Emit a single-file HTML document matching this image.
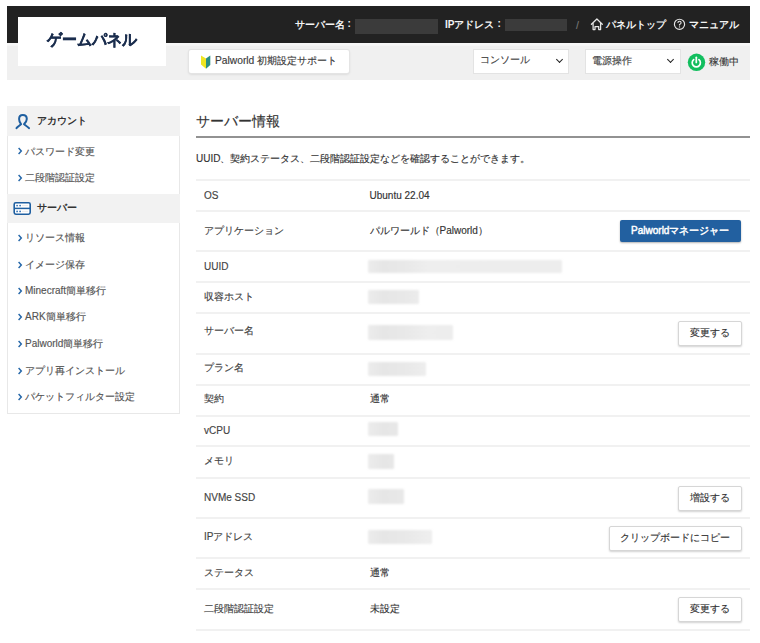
<!DOCTYPE html>
<html lang="ja">
<head>
<meta charset="utf-8">
<style>
*{box-sizing:border-box;margin:0;padding:0}
html,body{width:760px;height:643px;overflow:hidden;background:#fff}
body{position:relative;font-family:"Liberation Sans",sans-serif;font-size:10px;color:#333}
.a{position:absolute;white-space:nowrap}
.t{position:absolute;white-space:nowrap;line-height:14px;height:14px;-webkit-text-stroke:0.15px currentColor}
/* header */
#dark{left:7px;top:6px;width:743px;height:37px;background:#222}
#band{left:7px;top:43px;width:743px;height:2px;background:#f7f7f7}
#gray{left:7px;top:45px;width:743px;height:35px;background:linear-gradient(#f5f5f5 0,#f5f5f5 1px,#f0f0f0 1px)}
#logo{left:18px;top:17px;width:148px;height:49px;background:#fff}
#logotxt{left:18px;top:31px;width:148px;text-align:center;font-weight:bold;font-size:14.6px;line-height:18px;height:18px;color:#1b2e4e;letter-spacing:0;transform:scaleY(1.07);-webkit-text-stroke:0.35px #1b2e4e !important}
.ht{color:#f4f4f4;font-weight:bold;font-size:10px;-webkit-text-stroke:0 !important}
.red{position:absolute;background:#3b3b3b}
.btn{position:absolute;background:#fff;border:1px solid #d6d6d6;border-radius:2px;box-shadow:0 1px 2px rgba(0,0,0,.18);text-align:center;color:#333}
.sel{position:absolute;background:#fff;border:1px solid #e3e3e3}
/* sidebar */
#side{left:7px;top:106px;width:173px;height:308px;border:1px solid #e8e8e8;border-top:none;background:#fff}
.sh{position:absolute;left:7px;width:173px;background:#f2f2f2}
.sht{font-weight:bold;font-size:10px;color:#333;-webkit-text-stroke:0 !important}
.it{color:#555}
.chev{position:absolute;left:16.3px;width:4.7px;height:4.7px;border-right:2px solid #1b5896;border-top:2px solid #1b5896;transform:rotate(45deg)}
.dchev{position:absolute;width:5px;height:5px;border-right:1.8px solid #222;border-top:1.8px solid #222;transform:rotate(135deg)}
/* main */
.line{position:absolute;left:196px;width:554px;height:2px;background:#f1f1f1}
.lab{color:#444}
.val{color:#333}
.blur{position:absolute;background:linear-gradient(90deg,#ececec 0,#e6e6e6 15px,#e9e9e9 40px,#eeeeee 60px,#ededed 100%);border-radius:1px;filter:blur(1.1px)}
</style>
</head>
<body>
<!-- header -->
<div class="a" id="dark"></div>
<div class="a" id="band"></div>
<div class="a" id="gray"></div>
<div class="a" id="logo"></div>
<div class="t" id="logotxt">ゲームパネル</div>

<div class="t ht" style="left:295px;top:17.5px">サーバー名</div><div class="t ht" style="left:347.5px;top:17px">:</div>
<div class="red" style="left:355px;top:19px;width:83px;height:15px"></div>
<div class="t ht" style="left:445px;top:17.5px">IPアドレス</div><div class="t ht" style="left:497.5px;top:17px">:</div>
<div class="red" style="left:505px;top:19px;width:62px;height:12px"></div>
<div class="t" style="left:576px;top:17.5px;color:#777;font-size:10.5px">/</div>
<svg class="a" style="left:588px;top:15px" width="20" height="20" viewBox="0 0 20 20"><path d="M3.4 9.3 L8.9 4 L14.3 9.3 M5.1 7.8 V14.6 H7 V11.5 H10.7 V14.6 H12.6 V7.8" fill="none" stroke="#e6e6e6" stroke-width="1.25" stroke-linejoin="round" stroke-linecap="round"/></svg>
<div class="t ht" style="left:606px;top:17.5px">パネルトップ</div>
<svg class="a" style="left:673px;top:18px" width="13" height="13" viewBox="0 0 13 13"><circle cx="6.5" cy="6.3" r="5.1" fill="none" stroke="#e6e6e6" stroke-width="1.15"/><path d="M4.9 5.1 Q4.9 3.3 6.5 3.3 Q8.1 3.3 8.1 4.8 Q8.1 5.9 6.5 6.5 V7.4" fill="none" stroke="#e6e6e6" stroke-width="1.1"/><circle cx="6.5" cy="8.9" r="0.65" fill="#e6e6e6"/></svg>
<div class="t ht" style="left:689px;top:17.5px">マニュアル</div>

<!-- toolbar -->
<div class="btn" style="left:189px;top:49.6px;width:160px;height:23.8px;border:none;box-shadow:0 0 0 1px #e4e4e4,0 1px 3px rgba(0,0,0,.16)"></div>
<svg class="a" style="left:201px;top:54.5px" width="10" height="14" viewBox="0 0 10 14"><path d="M0 0.5 L5 3.5 L5 13.8 L0 9.6 Z" fill="#efe522"/><path d="M9.3 0.5 L5 3.5 L5 13.8 L9.3 10 Z" fill="#2c8f84"/></svg>
<div class="t" style="left:215px;top:53.8px;color:#3a3a3a;font-size:10.25px">Palworld 初期設定サポート</div>

<div class="sel" style="left:473px;top:49px;width:96px;height:25px"></div>
<div class="t" style="left:479.5px;top:53px;color:#444">コンソール</div>
<div class="dchev" style="left:557px;top:57px"></div>
<div class="sel" style="left:585px;top:49px;width:96px;height:25px"></div>
<div class="t" style="left:592px;top:53.5px;color:#444">電源操作</div>
<div class="dchev" style="left:668px;top:57px"></div>
<svg class="a" style="left:687px;top:52.5px" width="19" height="19" viewBox="0 0 19 19"><circle cx="9.5" cy="9.3" r="8.7" fill="#12be5e"/><path d="M6.66 6.66 A4.1 4.1 0 1 0 11.94 6.66" fill="none" stroke="#fff" stroke-width="1.7" stroke-linecap="round"/><path d="M9.3 4.3 V9.4" stroke="#fff" stroke-width="1.7" stroke-linecap="round"/></svg>
<div class="t" style="left:708.5px;top:54.5px;color:#333;-webkit-text-stroke:0.1px #333">稼働中</div>

<!-- sidebar -->
<div class="a" id="side"></div>
<div class="sh" style="top:106px;height:30px"></div>
<svg class="a" style="left:10px;top:108px" width="26" height="26" viewBox="0 0 26 26"><path d="M6.5 20.2 C8 18.2 10 17.6 11.1 16.2 C9.8 14.8 9.1 13.3 9.1 11 C9.1 8.5 10.6 7 12.8 7 C15.1 7 16.8 8.5 16.8 11 C16.8 13.3 15.3 14.8 14 16.2 C15.2 17.6 17.5 18.2 19 20.2" fill="none" stroke="#1f5fa0" stroke-width="2" stroke-linecap="round" stroke-linejoin="round"/></svg>
<div class="t sht" style="left:37px;top:114px">アカウント</div>
<svg class="a" style="left:16px;top:146.45px" width="8" height="10" viewBox="0 0 8 10"><path d="M2.6 2.1 L5.3 5 L2.6 7.9" fill="none" stroke="#2466a8" stroke-width="1.45"/></svg>
<div class="t it" style="left:25px;top:144.5px">パスワード変更</div>
<svg class="a" style="left:16px;top:173.10px" width="8" height="10" viewBox="0 0 8 10"><path d="M2.6 2.1 L5.3 5 L2.6 7.9" fill="none" stroke="#2466a8" stroke-width="1.45"/></svg>
<div class="t it" style="left:25px;top:171px">二段階認証設定</div>

<div class="sh" style="top:194px;height:29px"></div>
<svg class="a" style="left:10px;top:196px" width="26" height="26" viewBox="0 0 26 26"><rect x="4.2" y="6.7" width="16" height="11.5" rx="1.6" fill="#fff" stroke="#1f5fa0" stroke-width="1.6"/><path d="M4.2 12.4 H20.2" stroke="#1f5fa0" stroke-width="1.5"/><path d="M12 9.6 H18 M12 15.4 H18" stroke="#e4e4e4" stroke-width="0.8"/><circle cx="7.1" cy="9.6" r="0.85" fill="#2a6ab0"/><circle cx="10.1" cy="9.6" r="0.85" fill="#2a6ab0"/><circle cx="7.1" cy="15.4" r="0.85" fill="#2a6ab0"/><circle cx="10.1" cy="15.4" r="0.85" fill="#2a6ab0"/></svg>
<div class="t sht" style="left:37px;top:200.5px">サーバー</div>
<svg class="a" style="left:16px;top:233.35px" width="8" height="10" viewBox="0 0 8 10"><path d="M2.6 2.1 L5.3 5 L2.6 7.9" fill="none" stroke="#2466a8" stroke-width="1.45"/></svg>
<div class="t it" style="left:25px;top:231px">リソース情報</div>
<svg class="a" style="left:16px;top:259.70px" width="8" height="10" viewBox="0 0 8 10"><path d="M2.6 2.1 L5.3 5 L2.6 7.9" fill="none" stroke="#2466a8" stroke-width="1.45"/></svg>
<div class="t it" style="left:25px;top:257.5px">イメージ保存</div>
<svg class="a" style="left:16px;top:285.80px" width="8" height="10" viewBox="0 0 8 10"><path d="M2.6 2.1 L5.3 5 L2.6 7.9" fill="none" stroke="#2466a8" stroke-width="1.45"/></svg>
<div class="t it" style="left:25px;top:283.5px">Minecraft簡単移行</div>
<svg class="a" style="left:16px;top:312.45px" width="8" height="10" viewBox="0 0 8 10"><path d="M2.6 2.1 L5.3 5 L2.6 7.9" fill="none" stroke="#2466a8" stroke-width="1.45"/></svg>
<div class="t it" style="left:25px;top:310px">ARK簡単移行</div>
<svg class="a" style="left:16px;top:339.35px" width="8" height="10" viewBox="0 0 8 10"><path d="M2.6 2.1 L5.3 5 L2.6 7.9" fill="none" stroke="#2466a8" stroke-width="1.45"/></svg>
<div class="t it" style="left:25px;top:337px">Palworld簡単移行</div>
<svg class="a" style="left:16px;top:366.10px" width="8" height="10" viewBox="0 0 8 10"><path d="M2.6 2.1 L5.3 5 L2.6 7.9" fill="none" stroke="#2466a8" stroke-width="1.45"/></svg>
<div class="t it" style="left:25px;top:364px">アプリ再インストール</div>
<svg class="a" style="left:16px;top:392.30px" width="8" height="10" viewBox="0 0 8 10"><path d="M2.6 2.1 L5.3 5 L2.6 7.9" fill="none" stroke="#2466a8" stroke-width="1.45"/></svg>
<div class="t it" style="left:25px;top:390px">パケットフィルター設定</div>

<!-- main -->
<div class="t" style="left:196px;top:112px;font-size:14px;line-height:18px;height:18px;color:#333">サーバー情報</div>
<div class="a" style="left:196px;top:136px;width:554px;height:2px;background:#929292"></div>
<div class="t" style="left:196px;top:151.5px;color:#333">UUID、契約ステータス、二段階認証設定などを確認することができます。</div>

<div class="line" style="top:178.8px"></div>
<div class="t lab" style="left:204px;top:188.7px">OS</div>
<div class="t val" style="left:369.5px;top:188.7px">Ubuntu 22.04</div>
<div class="line" style="top:210.3px"></div>
<div class="t lab" style="left:204px;top:223.5px">アプリケーション</div>
<div class="t val" style="left:369.5px;top:223.5px">パルワールド（Palworld）</div>
<div class="a" style="left:619.5px;top:219.5px;width:121.5px;height:22.5px;background:#2260a0;border-radius:2px;box-shadow:0 1px 2px rgba(0,0,0,.3)"></div>
<div class="t" style="left:619.5px;top:223.5px;width:121.5px;text-align:center;color:#fff;-webkit-text-stroke:0.45px #fff">Palworldマネージャー</div>
<div class="line" style="top:250.2px"></div>
<div class="t lab" style="left:204px;top:259.8px">UUID</div>
<div class="blur" style="left:368px;top:259.5px;width:194px;height:13px"></div>
<div class="line" style="top:281.3px"></div>
<div class="t lab" style="left:204px;top:290px">収容ホスト</div>
<div class="blur" style="left:368px;top:289.5px;width:51px;height:14px"></div>
<div class="line" style="top:311.7px"></div>
<div class="t lab" style="left:204px;top:324px">サーバー名</div>
<div class="blur" style="left:368px;top:325px;width:85px;height:14.5px"></div>
<div class="btn" style="left:678px;top:320.5px;width:64px;height:25px"></div>
<div class="t" style="left:678px;top:325.5px;width:64px;text-align:center;color:#333">変更する</div>
<div class="line" style="top:352.7px"></div>
<div class="t lab" style="left:204px;top:361px">プラン名</div>
<div class="blur" style="left:368px;top:361.5px;width:58px;height:14.5px"></div>
<div class="line" style="top:383.8px"></div>
<div class="t lab" style="left:204px;top:392px">契約</div>
<div class="t val" style="left:369.5px;top:392px">通常</div>
<div class="line" style="top:414.6px"></div>
<div class="t lab" style="left:204px;top:424px">vCPU</div>
<div class="blur" style="left:368px;top:422px;width:30px;height:14px"></div>
<div class="line" style="top:445.4px"></div>
<div class="t lab" style="left:204px;top:454px">メモリ</div>
<div class="blur" style="left:368px;top:454px;width:26px;height:14.5px"></div>
<div class="line" style="top:476.7px"></div>
<div class="t lab" style="left:204px;top:491px">NVMe SSD</div>
<div class="blur" style="left:368px;top:488.5px;width:36px;height:15.5px"></div>
<div class="btn" style="left:678px;top:485.5px;width:64px;height:25px"></div>
<div class="t" style="left:678px;top:490.5px;width:64px;text-align:center;color:#333">増設する</div>
<div class="line" style="top:516.9px"></div>
<div class="t lab" style="left:204px;top:529.5px">IPアドレス</div>
<div class="blur" style="left:368px;top:529.5px;width:64px;height:14px"></div>
<div class="btn" style="left:608.5px;top:525.5px;width:133.5px;height:25px"></div>
<div class="t" style="left:608.5px;top:530.5px;width:133.5px;text-align:center;color:#333">クリップボードにコピー</div>
<div class="line" style="top:556.8px"></div>
<div class="t lab" style="left:204px;top:565.5px">ステータス</div>
<div class="t val" style="left:369.5px;top:565.5px">通常</div>
<div class="line" style="top:587.9px"></div>
<div class="t lab" style="left:204px;top:601.5px">二段階認証設定</div>
<div class="t val" style="left:369.5px;top:601.5px">未設定</div>
<div class="btn" style="left:678px;top:596.5px;width:64px;height:25px"></div>
<div class="t" style="left:678px;top:601.5px;width:64px;text-align:center;color:#333">変更する</div>
<div class="line" style="top:628.5px"></div>
</body>
</html>
